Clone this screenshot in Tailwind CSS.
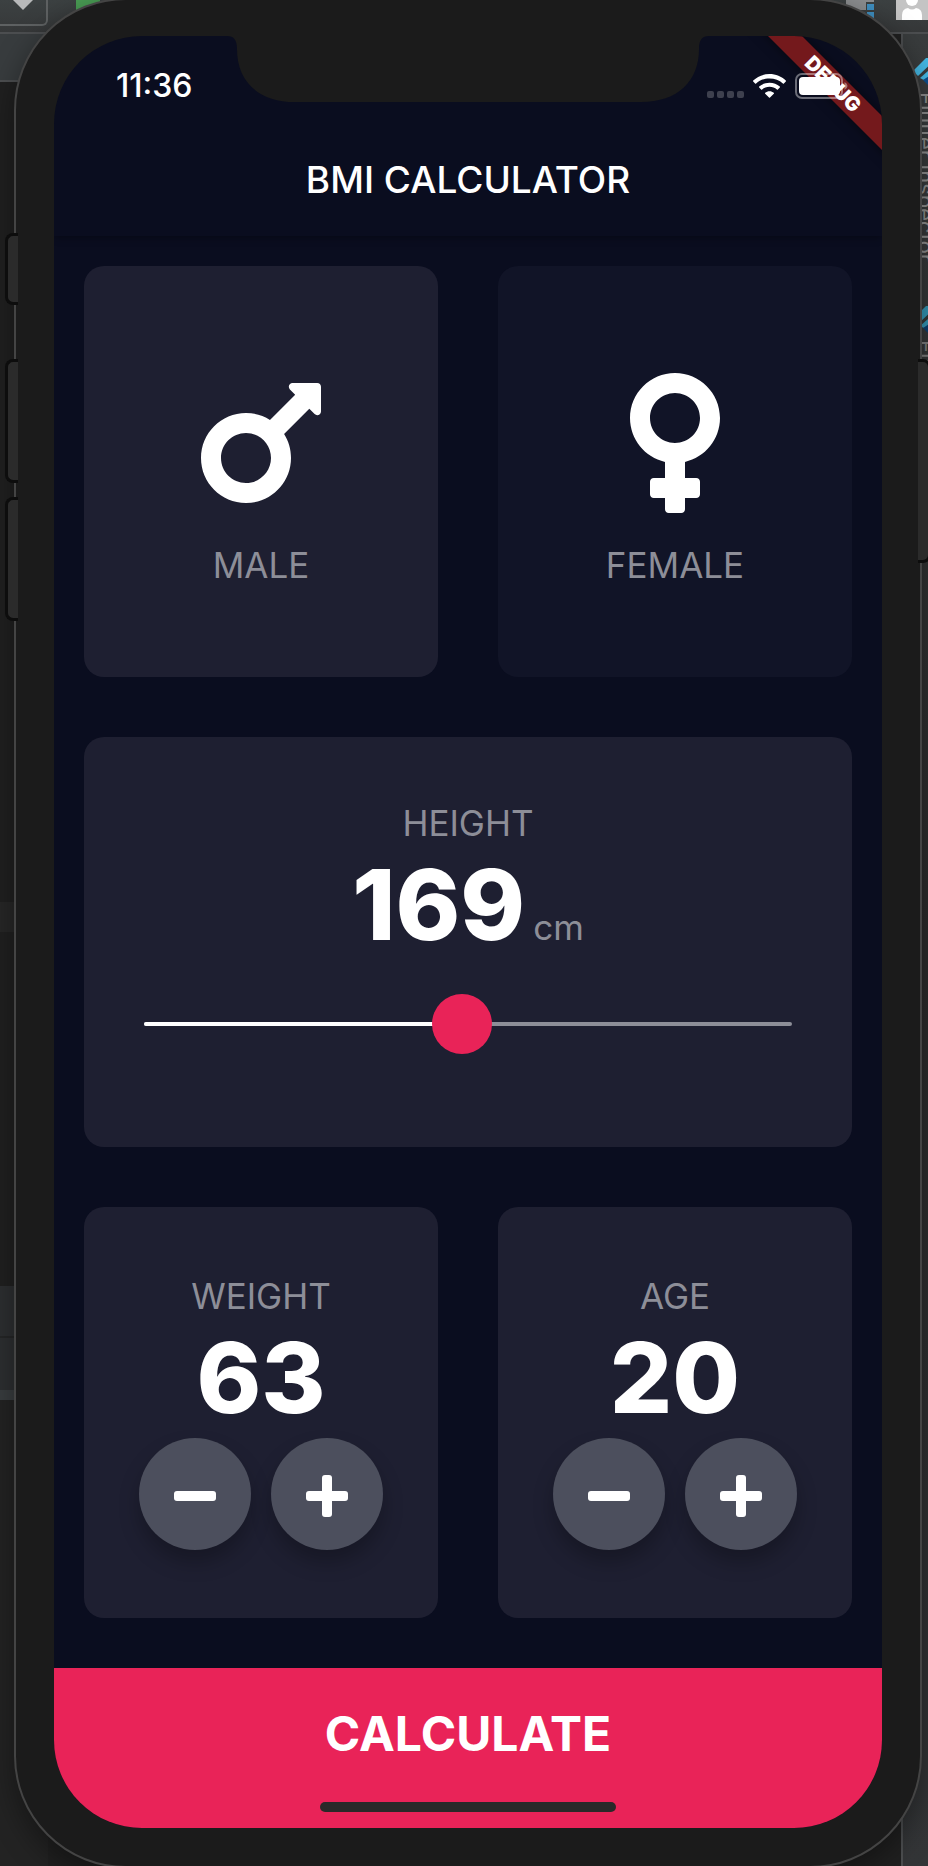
<!DOCTYPE html>
<html lang="en">
<head>
<meta charset="utf-8">
<meta name="viewport" content="width=device-width, initial-scale=1">
<title>BMI Calculator</title>
<script src="https://cdn.jsdelivr.net/npm/@tailwindcss/browser@4"></script>
</head>
<body class="bg-[#202020] font-['Inter',sans-serif] text-white">
<div class="relative flex min-h-screen overflow-hidden pl-[14px] pr-[6px]">

  <!-- Editor windows behind the phone -->
  <div class="absolute inset-0 flex flex-col" aria-hidden="true">
    <div class="flex h-[34px] shrink-0 items-start justify-between border-b-2 border-[#4c4e50] bg-gradient-to-b from-[#3c4142] to-[#363839]">
      <div class="flex">
        <div class="flex h-[26px] w-12 justify-center rounded-br-md border-b-2 border-r-2 border-[#5e6162]">
          <svg class="h-[10px] w-5" viewBox="0 0 20 10"><path d="M0 0h20L10 10z" fill="#b8b9ba"/></svg>
        </div>
        <div class="ml-7 h-3 w-6 bg-[#499c54]"></div>
      </div>
      <div class="flex">
        <svg class="h-5 w-7" viewBox="0 0 28 20"><path d="M0 0h28v2H20v8H0z" fill="#8b8d8f"/><path d="M21 4h7v6h-7zM21 12h7v6h-7zM13 12h6v6h-6z" fill="#3f8fc0"/></svg>
        <svg class="ml-[22px] h-5 w-8" viewBox="0 0 32 20"><path d="M0 0h32v20H0z" fill="#c4c4c4"/><circle cx="16" cy="0" r="6" fill="#fff"/><path d="M6 20v-5q0-6 6-7 4 3 8 0 6 1 6 7v5z" fill="#fff"/></svg>
      </div>
    </div>
    <div class="flex flex-1 justify-between">
      <div class="flex w-12 flex-col">
        <div class="h-12 shrink-0 border-b-2 border-[#4c4e50] bg-[#383c3e]"></div>
        <div class="h-[820px] bg-[#202020]"></div>
        <div class="h-[30px] bg-[#272727]"></div>
        <div class="h-[354px] bg-[#202020]"></div>
        <div class="h-[50px] bg-[#2d2f31]"></div>
        <div class="h-16 border-t-2 border-b-10 border-t-[#252627] border-b-[#393d3f] bg-[#2d2f31]"></div>
        <div class="flex-1 bg-[#232323]"></div>
      </div>
      <div class="flex w-[27px] flex-col items-start border-l-2 border-[#4c4e50] bg-gradient-to-b from-[#393c3d] via-[#2b2b2b] to-[#333537] pt-6 pl-[10px]">
        <svg class="h-7 w-6 shrink-0" viewBox="0 0 24 28"><path d="M0 13 13 0h11L5 18z" fill="#45b8e4"/><path d="M7 20 16 12h8v9l-4 6z" fill="#45b8e4"/><path d="m10 22 6-4 8 9H15z" fill="#0d4f8c"/></svg>
        <div class="h-[220px] pt-[6px] pl-[2px] text-[22px] leading-[22px] whitespace-nowrap text-[#8d8d8d] [writing-mode:vertical-rl]">Flutter Inspector</div>
        <svg class="h-7 w-6 shrink-0" viewBox="0 0 24 28"><path d="M0 13 13 0h11L5 18z" fill="#3595b5"/><path d="M7 20 16 12h8v9l-4 6z" fill="#3595b5"/><path d="m10 22 6-4 8 9H15z" fill="#0d3f70"/></svg>
        <div class="h-[220px] pt-[6px] pl-[2px] text-[22px] leading-[22px] whitespace-nowrap text-[#7d7d7d] [writing-mode:vertical-rl]">Flutter Outline</div>
      </div>
    </div>
  </div>

  <!-- Phone -->
  <div class="relative -my-0.5 flex flex-1 rounded-[112px] border-2 border-[#444444] bg-[#1b1b1b] px-[38px] pt-9 pb-[38px] shadow-[0_10px_30px_rgba(0,0,0,0.4)]">
    <div class="absolute top-[233px] -left-[11px] h-18 w-[13px] rounded-l-lg border-3 border-r-0 border-[#0d0d0d] bg-[#2b2b2b]"></div>
    <div class="absolute top-[359px] -left-[11px] h-31 w-[13px] rounded-l-lg border-3 border-r-0 border-[#0d0d0d] bg-[#2b2b2b]"></div>
    <div class="absolute top-[497px] -left-[11px] h-31 w-[13px] rounded-l-lg border-3 border-r-0 border-[#0d0d0d] bg-[#2b2b2b]"></div>
    <div class="absolute top-[359px] -right-[11px] h-51 w-[13px] rounded-r-lg border-3 border-l-0 border-[#0d0d0d] bg-[#2b2b2b]"></div>

    <main class="relative flex flex-1 flex-col overflow-hidden rounded-[88px] bg-[#0a0d1f]">
      <!-- Debug ribbon -->
      <div class="absolute top-9 -right-[71px] z-10 flex h-6 w-60 rotate-45 items-center justify-center bg-[#74191c] text-xl leading-6 font-black shadow-[0_0_12px_rgba(0,0,0,0.5)]">DEBUG</div>
      <!-- Notch -->
      <svg class="absolute top-0 left-1/2 h-[66px] w-[482px] -translate-x-1/2" viewBox="0 0 482 66" aria-hidden="true"><path d="M0 0h482c-7 0-10 4-10 13 0 32-21 53-58 53H68C31 66 10 45 10 13 10 4 7 0 0 0z" fill="#1b1b1b"/></svg>

      <header class="shadow-[0_1px_8px_rgba(0,0,0,0.4)]">
        <div class="relative z-20 flex h-22 items-center justify-between pt-3 pr-[34px] pl-[62px]">
          <span class="text-[32px] leading-9 font-medium">11:36</span>
          <div class="flex items-center">
            <svg class="mt-4 h-[7px] w-[37px]" viewBox="0 0 37 7" fill="#3e404e" aria-hidden="true"><rect width="7" height="7" rx="2"/><rect x="10" width="7" height="7" rx="2"/><rect x="20" width="7" height="7" rx="2"/><rect x="30" width="7" height="7" rx="2"/></svg>
            <svg class="ml-[9px] h-6 w-[33px]" viewBox="0 0 33 24" fill="#fff" aria-hidden="true"><path d="M16.500 0C10.200 0 4.400 2.500.2 6.500q-.4.500 0 1l1.900 1.900q.5.500 1 0C6.600 6.200 11.300 4.400 16.500 4.400s9.900 1.800 13.400 5q.5.500 1 0l1.900-1.900q.4-.5 0-1C28.600 2.500 22.800 0 16.500 0z"/><path d="M16.500 8.700c-4 0-7.600 1.500-10.300 3.900q-.5.500 0 1l1.900 1.900q.5.500 1 0c2-1.700 4.500-2.700 7.400-2.700s5.400 1 7.400 2.700q.5.500 1 0l1.900-1.900q.5-.5 0-1c-2.700-2.400-6.300-3.900-10.300-3.900z"/><path d="M16.500 17.200c-1.700 0-3.200.6-4.300 1.600q-.5.500 0 1l3.800 3.800q.5.500 1 0l3.800-3.800q.5-.5 0-1c-1.100-1-2.600-1.600-4.300-1.600z"/></svg>
            <svg class="ml-[9px] h-[26px] w-[53px]" viewBox="0 0 53 26" aria-hidden="true"><rect x="1" y="1" width="46" height="24" rx="6" fill="none" stroke="#fff" stroke-opacity=".4" stroke-width="2"/><rect x="4" y="4" width="41" height="18" rx="4" fill="#fff"/><path d="M49.500 9q3 1.300 3 4t-3 4z" fill="#fff" fill-opacity=".4"/></svg>
          </div>
        </div>
        <h1 class="text-center text-[37px] leading-[112px] font-medium">BMI CALCULATOR</h1>
      </header>

      <div class="flex flex-1 flex-col gap-[60px] px-[30px] pt-[30px] pb-[50px]">
        <div class="grid flex-1 basis-0 grid-cols-2 gap-[60px]">
          <button type="button" class="flex flex-col items-center justify-center rounded-[20px] bg-[#1e1f31]">
            <svg class="mt-2 mb-5 h-40 w-[120px]" viewBox="0 0 384 512" fill="#fff" aria-hidden="true"><path d="M372 64h-79c-10.700 0-16 12.900-8.500 20.500l16.900 16.900-80.700 80.700C198.500 167.900 172.200 160 144 160 64.500 160 0 224.500 0 304s64.500 144 144 144 144-64.500 144-144c0-28.200-7.900-54.500-22.100-76.700l80.700-80.700 16.900 16.900c7.600 7.600 20.500 2.200 20.500-8.500V76c0-6.600-5.400-12-12-12zM144 384c-44.100 0-80-35.900-80-80s35.900-80 80-80 80 35.900 80 80-35.900 80-80 80z"/></svg>
            <span class="text-[35px] leading-11 text-[#8d8e98]">MALE</span>
          </button>
          <button type="button" class="flex flex-col items-center justify-center rounded-[20px] bg-[#111427]">
            <svg class="mt-2 mb-5 h-40 w-[90px]" viewBox="0 0 288 512" fill="#fff" aria-hidden="true"><path d="M288 176c0-79.500-64.500-144-144-144S0 96.500 0 176c0 68.500 47.900 125.900 112 140.400V368H76c-6.600 0-12 5.400-12 12v40c0 6.600 5.400 12 12 12h36v36c0 6.600 5.400 12 12 12h40c6.600 0 12-5.400 12-12v-36h36c6.600 0 12-5.400 12-12v-40c0-6.600-5.400-12-12-12h-36v-51.600c64.100-14.500 112-71.900 112-140.400zm-224 0c0-44.100 35.900-80 80-80s80 35.900 80 80-35.900 80-80 80-80-35.900-80-80z"/></svg>
            <span class="text-[35px] leading-11 text-[#8d8e98]">FEMALE</span>
          </button>
        </div>

        <section class="flex flex-1 basis-0 flex-col justify-center rounded-[20px] bg-[#1e1f31] px-[30px]">
          <label for="height" class="text-center text-[35px] leading-11 text-[#8d8e98]">HEIGHT</label>
          <div class="flex items-baseline justify-center gap-2">
            <span class="text-[98px] leading-[120px] font-extrabold">169</span>
            <span class="text-[35px] leading-11 text-[#8d8e98]">cm</span>
          </div>
          <div class="grid h-[118px] items-center">
            <div class="mx-[30px] flex h-1 overflow-hidden rounded-full bg-[#8d8e98] [grid-area:1/1]"><div class="bg-white" style="width:49%"></div></div>
            <input id="height" type="range" min="120" max="220" value="169" class="h-15 w-full cursor-pointer appearance-none bg-transparent [grid-area:1/1] [&::-webkit-slider-thumb]:size-15 [&::-webkit-slider-thumb]:appearance-none [&::-webkit-slider-thumb]:rounded-full [&::-webkit-slider-thumb]:bg-[#e92358]">
          </div>
        </section>

        <div class="grid flex-1 basis-0 grid-cols-2 gap-[60px]">
          <section class="flex flex-col items-center justify-center rounded-[20px] bg-[#1e1f31] pb-[2px]">
            <h2 class="text-[35px] leading-11 text-[#8d8e98]">WEIGHT</h2>
            <output class="text-[98px] leading-[120px] font-extrabold">63</output>
            <div class="flex gap-5">
              <button type="button" aria-label="Decrease weight" class="flex size-28 items-center justify-center rounded-full bg-[#4c4f5d] pt-1 shadow-[0_12px_20px_rgba(0,0,0,0.25)]"><svg class="size-[42px]" viewBox="0 0 42 42" fill="#fff"><rect y="16" width="42" height="10" rx="3"/></svg></button>
              <button type="button" aria-label="Increase weight" class="flex size-28 items-center justify-center rounded-full bg-[#4c4f5d] pt-1 shadow-[0_12px_20px_rgba(0,0,0,0.25)]"><svg class="size-[42px]" viewBox="0 0 42 42" fill="#fff"><rect y="16" width="42" height="10" rx="3"/><rect x="16" width="10" height="42" rx="3"/></svg></button>
            </div>
          </section>
          <section class="flex flex-col items-center justify-center rounded-[20px] bg-[#1e1f31] pb-[2px]">
            <h2 class="text-[35px] leading-11 text-[#8d8e98]">AGE</h2>
            <output class="text-[98px] leading-[120px] font-extrabold">20</output>
            <div class="flex gap-5">
              <button type="button" aria-label="Decrease age" class="flex size-28 items-center justify-center rounded-full bg-[#4c4f5d] pt-1 shadow-[0_12px_20px_rgba(0,0,0,0.25)]"><svg class="size-[42px]" viewBox="0 0 42 42" fill="#fff"><rect y="16" width="42" height="10" rx="3"/></svg></button>
              <button type="button" aria-label="Increase age" class="flex size-28 items-center justify-center rounded-full bg-[#4c4f5d] pt-1 shadow-[0_12px_20px_rgba(0,0,0,0.25)]"><svg class="size-[42px]" viewBox="0 0 42 42" fill="#fff"><rect y="16" width="42" height="10" rx="3"/><rect x="16" width="10" height="42" rx="3"/></svg></button>
            </div>
          </section>
        </div>
      </div>

      <button type="button" class="flex h-40 flex-col items-center bg-[#e92358] pt-9">
        <span class="text-[48px] leading-[60px] font-bold">CALCULATE</span>
        <span class="mt-[38px] h-[10px] w-[296px] rounded-full bg-[#292929]"></span>
      </button>
    </main>
  </div>
</div>
</body>
</html>
